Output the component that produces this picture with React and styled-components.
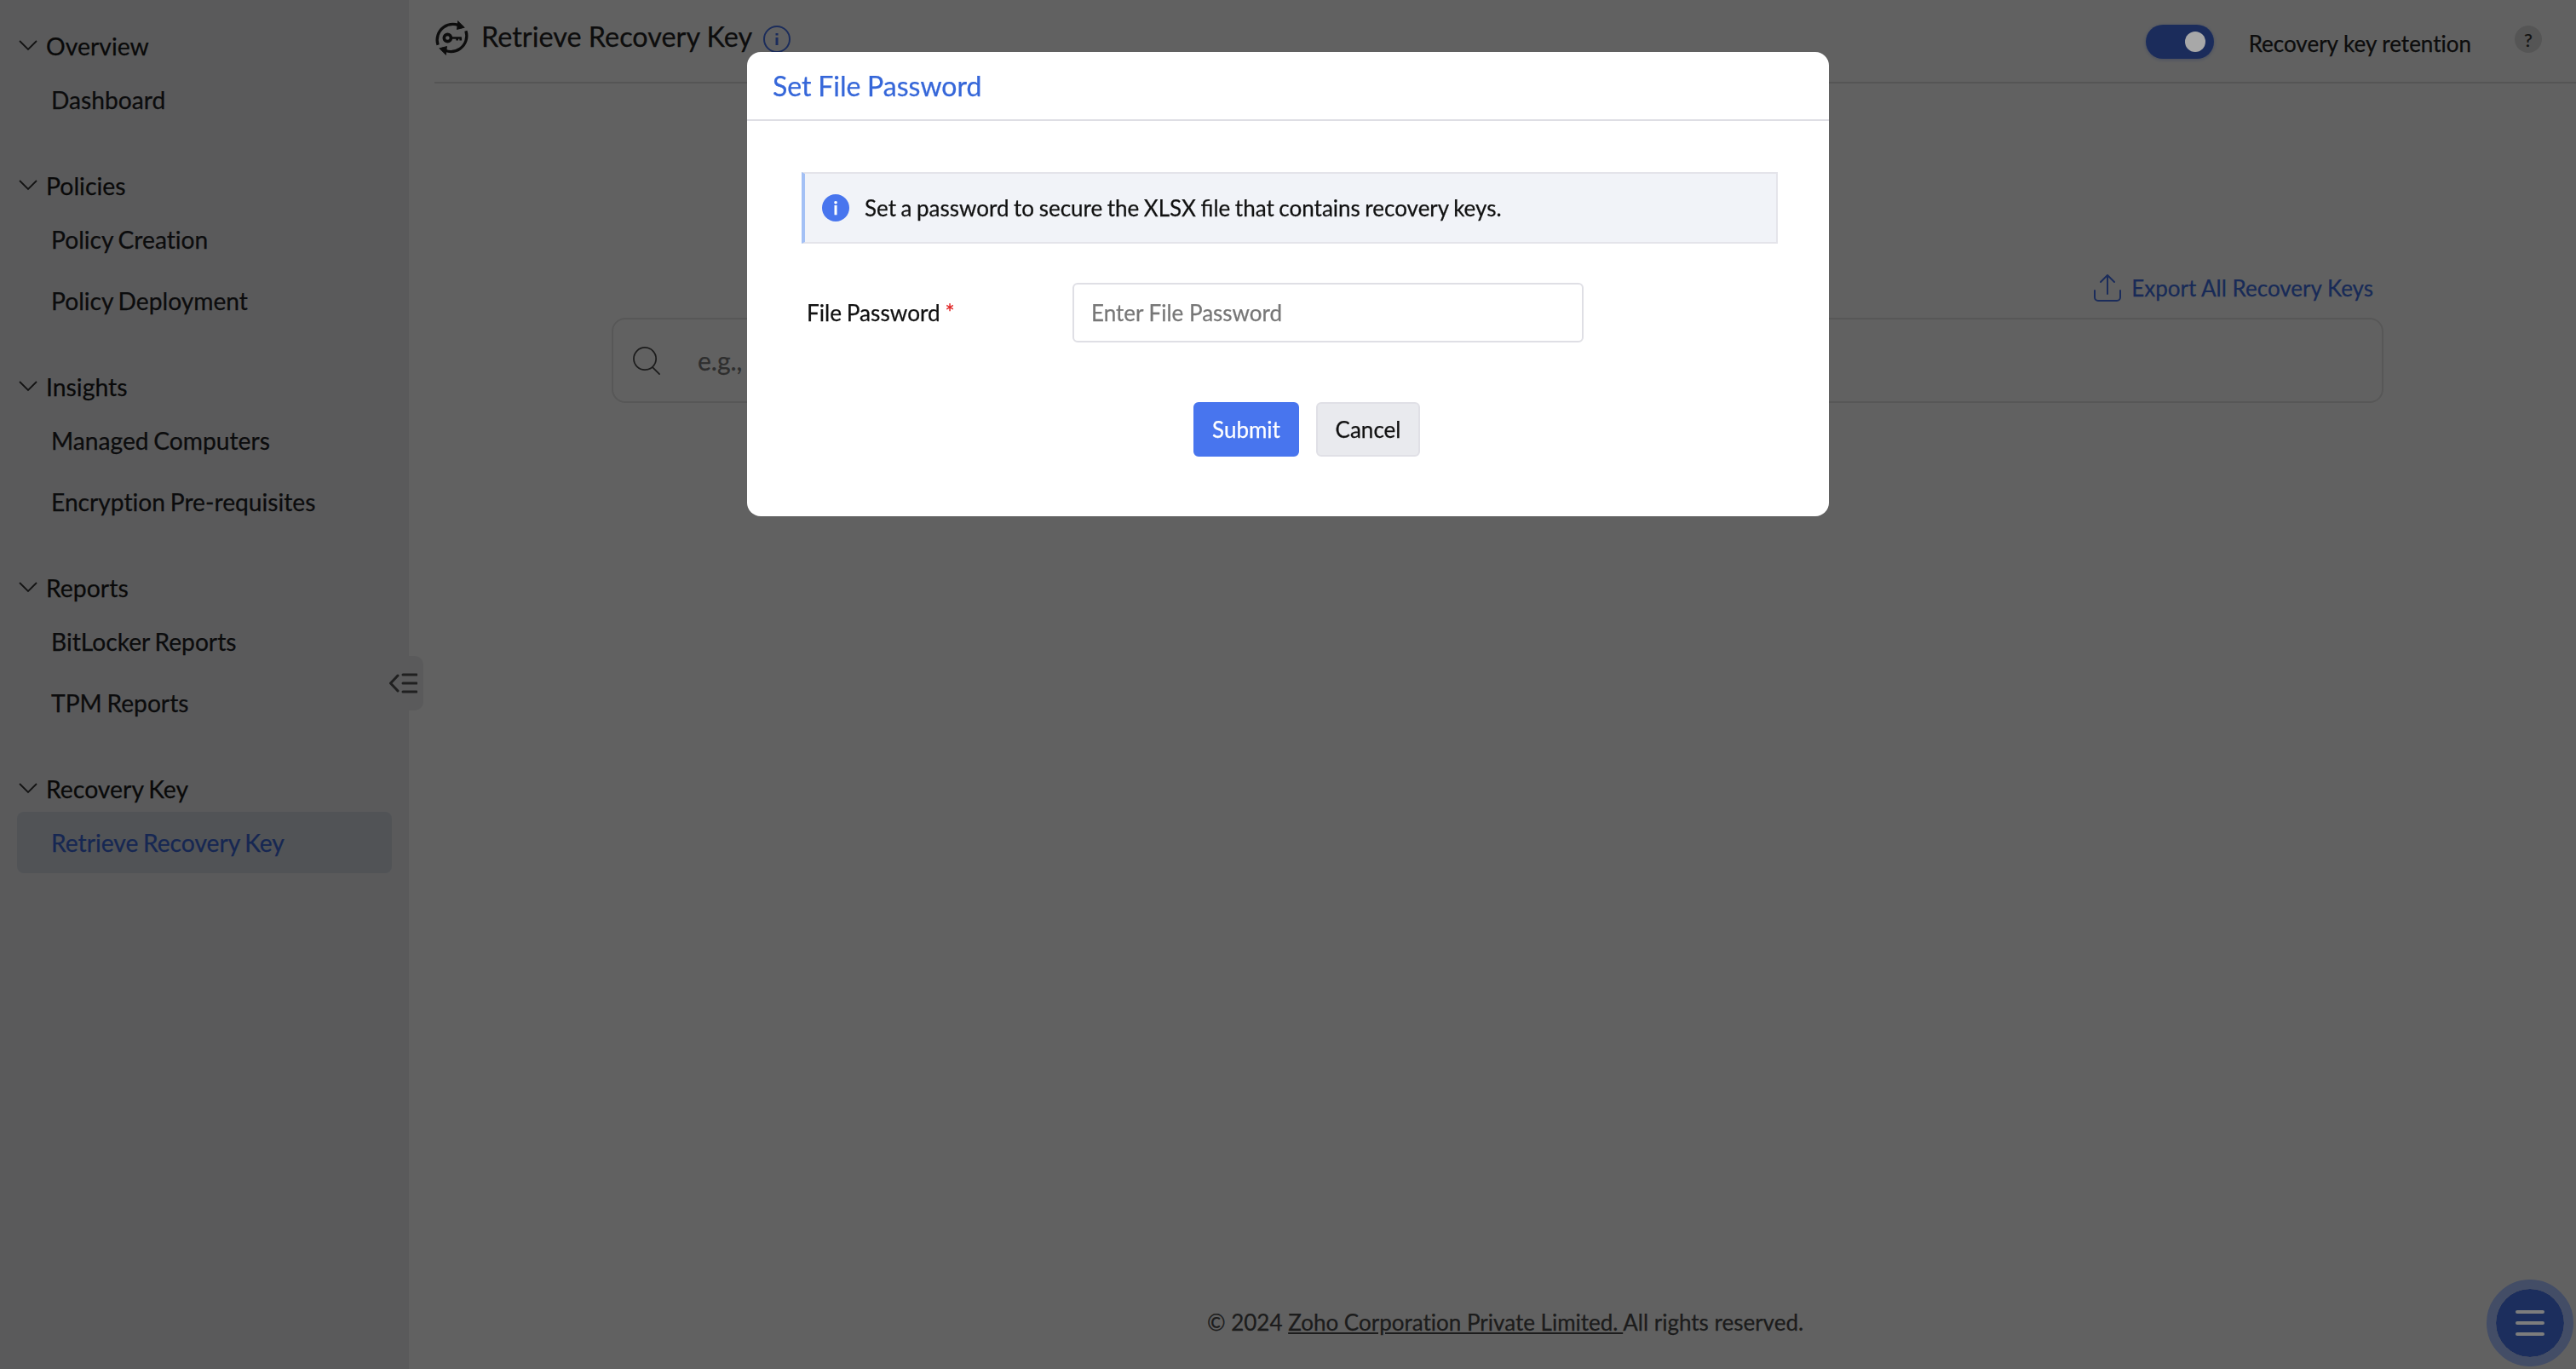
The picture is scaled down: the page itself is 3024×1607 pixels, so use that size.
import React from 'react';
import styled, {createGlobalStyle} from 'styled-components';

const GlobalStyle = createGlobalStyle`
	html, body {
		margin: 0;
		padding: 0;
		background: #fff;
		font-family: Lato, 'Open Sans', sans-serif;
		font-variant-ligatures: none;
		-webkit-text-stroke: 0.25px;
		color: #1f2124;
	}
	* {
		box-sizing: border-box;
	}
`;

const Page = styled.div`
	display: flex;
	width: 3024px;
	height: 1607px;
	overflow: hidden;
`;

const Sidebar = styled.aside`
	position: relative;
	flex: 0 0 480px;
	padding: 25px 20px 0;
	background: #ecedf0;
`;

const Group = styled.section`
	margin-bottom: 36px;
`;

const GroupHead = styled.div`
	display: flex;
	align-items: center;
	height: 56px;
	padding: 2px 0 0 2px;
	font-size: 28.4px;
	word-spacing: -1.5px;
	color: #1a1a1a;
`;

const Chevron = styled.svg`
	width: 22px;
	height: 14px;
	margin: -2px 10px 0 0;
	fill: none;
	stroke: #333;
	stroke-width: 1.8;
`;

const NavItem = styled.div`
	display: flex;
	align-items: center;
	height: 72px;
	padding-left: 40px;
	font-size: 28.2px;
	word-spacing: -1.5px;
	border-radius: 8px;
	color: ${props => (props.$active ? '#3a66d8' : '#1f2124')};
	background: ${props => (props.$active ? '#d4dae3' : 'transparent')};
`;

const CollapseTab = styled.div`
	position: absolute;
	top: 770px;
	right: -17px;
	display: flex;
	align-items: center;
	justify-content: flex-end;
	width: 40px;
	height: 64px;
	padding-right: 7px;
	background: #ecedf0;
	border-radius: 0 10px 10px 0;
	svg {
		flex: none;
		width: 33px;
		height: 24px;
		fill: none;
		stroke: #555;
		stroke-width: 3;
		stroke-linecap: round;
		stroke-linejoin: round;
	}
`;

const Main = styled.main`
	flex: 1;
	display: flex;
	flex-direction: column;
	padding-left: 30px;
`;

const Header = styled.header`
	display: flex;
	align-items: center;
	flex: 0 0 98px;
	padding: 0 40px 12px 0;
	border-bottom: 2px solid #dfdfdf;
`;

const KeyIcon = styled.svg`
	width: 41px;
	height: 41px;
	margin: 4px 14px 0 0;
	fill: none;
	stroke: #222;
`;

const Title = styled.h1`
	margin: 0;
	font-size: 32.4px;
	font-weight: 400;
	color: #222;
`;

const InfoIcon = styled.svg`
	width: 34px;
	height: 34px;
	margin: 8px 0 0 12px;
	fill: none;
	stroke: #4875ee;
	stroke-width: 2;
`;

const HeaderRight = styled.div`
	display: flex;
	align-items: center;
	margin: 14px 0 0 auto;
`;

const Toggle = styled.div`
	display: flex;
	align-items: center;
	justify-content: flex-end;
	width: 80px;
	height: 40px;
	padding-right: 10px;
	border-radius: 20px;
	background: #4875ee;
	box-shadow: 0 1px 4px rgba(72, 117, 238, 0.4);
`;

const Knob = styled.span`
	position: relative;
	z-index: 20;
	width: 24px;
	height: 24px;
	border-radius: 50%;
	background: #a8a8a8;
`;

const ToggleLabel = styled.span`
	margin: 4px 0 0 41px;
	font-size: 26px;
	color: #222;
`;

const HelpBadge = styled.span`
	display: flex;
	align-items: center;
	justify-content: center;
	width: 32px;
	height: 32px;
	margin: 0 0 6px 51px;
	border-radius: 50%;
	background: #e0e0e0;
	font-size: 22px;
	color: #333;
`;

const ExportRow = styled.div`
	display: flex;
	align-items: center;
	justify-content: flex-end;
	margin-top: 220px;
	padding-right: 238px;
	height: 40px;
	font-size: 26px;
	color: #4070e4;
`;

const ExportIcon = styled.svg`
	width: 34px;
	height: 34px;
	margin-right: 11px;
	fill: none;
	stroke: #4875ee;
	stroke-width: 2;
	stroke-linecap: round;
	stroke-linejoin: round;
`;

const SearchBox = styled.div`
	display: flex;
	align-items: center;
	height: 100px;
	margin: 15px 226px 0 208px;
	padding-left: 23px;
	border: 2px solid #e4e4e4;
	border-radius: 16px;
	font-size: 30px;
	color: #7a7a7a;
`;

const SearchIcon = styled.svg`
	width: 33px;
	height: 33px;
	margin-right: 43px;
	fill: none;
	stroke: #4a4a4a;
	stroke-width: 1.8;
	stroke-linecap: round;
`;

const Footer = styled.footer`
	margin-top: auto;
	padding-bottom: 39px;
	text-align: center;
	font-size: 26px;
	color: #4a4a4a;
	a {
		color: inherit;
		text-decoration: underline;
	}
`;

const Fab = styled.div`
	position: fixed;
	z-index: 20;
	left: 2919px;
	top: 1502px;
	display: flex;
	flex-direction: column;
	align-items: center;
	justify-content: center;
	gap: 9px;
	width: 102px;
	height: 102px;
	border-radius: 50%;
	background: #1c2e5d;
	border: 11px solid #434d66;
	background-clip: padding-box;
`;

const FabLine = styled.span`
	width: 34px;
	height: 4px;
	border-radius: 2px;
	background: #7d7d7d;
`;

const Overlay = styled.div`
	position: fixed;
	inset: 0;
	z-index: 10;
	display: flex;
	justify-content: center;
	align-items: flex-start;
	padding-top: 61px;
	background: rgba(0, 0, 0, 0.62);
`;

const Modal = styled.div`
	width: 1270px;
	height: 545px;
	background: #fff;
	border-radius: 16px;
	overflow: hidden;
`;

const ModalHead = styled.div`
	display: flex;
	align-items: center;
	height: 81px;
	padding-left: 30px;
	border-bottom: 2px solid #dedee4;
	font-size: 32px;
	word-spacing: -0.5px;
	color: #3667d9;
`;

const ModalBody = styled.div`
	padding: 60px 60px 0 64px;
`;

const Alert = styled.div`
	display: flex;
	align-items: center;
	height: 84px;
	padding-left: 20px;
	background: #f1f3f8;
	border: 2px solid #e4e4ea;
	border-left: 4px solid #a3c0f5;
	font-size: 26px;
	font-variant-ligatures: normal;
	word-spacing: -1.1px;
	color: #111;
`;

const AlertIcon = styled.span`
	display: flex;
	align-items: center;
	justify-content: center;
	width: 32px;
	height: 32px;
	margin-right: 18px;
	border-radius: 50%;
	background: #4875ee;
	color: #fff;
	font-size: 20px;
	font-weight: 700;
`;

const FormRow = styled.div`
	display: flex;
	align-items: center;
	margin-top: 46px;
`;

const FieldLabel = styled.label`
	flex: 0 0 318px;
	padding-left: 6px;
	font-size: 26.2px;
	word-spacing: -1px;
	color: #111;
	em {
		font-style: normal;
		color: #e02020;
	}
`;

const PasswordInput = styled.input`
	width: 600px;
	height: 70px;
	padding: 0 20px;
	border: 2px solid #dfdfe5;
	border-radius: 6px;
	font: 26px Lato, sans-serif;
	outline: none;
	&::placeholder {
		color: #777;
	}
`;

const Actions = styled.div`
	display: flex;
	justify-content: center;
	gap: 20px;
	margin: 70px 0 0 40px;
`;

const Button = styled.button`
	height: 64px;
	padding: 0;
	width: ${props => (props.$primary ? '124px' : '122px')};
	border-radius: 6px;
	border: 2px solid ${props => (props.$primary ? '#4875ee' : '#e0e0e6')};
	background: ${props => (props.$primary ? '#4875ee' : '#e9eaee')};
	color: ${props => (props.$primary ? '#fff' : '#111')};
	font: 26px Lato, sans-serif;
`;

const groups = [
	{title: 'Overview', items: ['Dashboard']},
	{title: 'Policies', items: ['Policy Creation', 'Policy Deployment']},
	{title: 'Insights', items: ['Managed Computers', 'Encryption Pre-requisites']},
	{title: 'Reports', items: ['BitLocker Reports', 'TPM Reports']},
	{title: 'Recovery Key', items: ['Retrieve Recovery Key']},
];

export default function App() {
	return (
		<>
			<GlobalStyle />
			<Page>
				<Sidebar>
					{groups.map(group => (
						<Group key={group.title}>
							<GroupHead>
								<Chevron viewBox="0 0 22 14">
									<path d="M1 2l10 10L21 2" />
								</Chevron>
								{group.title}
							</GroupHead>
							{group.items.map(item => (
								<NavItem key={item} $active={item === 'Retrieve Recovery Key'}>
									{item}
								</NavItem>
							))}
						</Group>
					))}
					<CollapseTab>
						<svg viewBox="0 0 33 24">
							<path d="M10 3L1.500 12l8.500 9" />
							<path d="M16 2h16M16 12h16M16 22h16" />
						</svg>
					</CollapseTab>
				</Sidebar>
				<Main>
					<Header>
						<KeyIcon viewBox="0 0 40 40">
							<path d="M32 8A18 18 0 0 0 4 28" strokeWidth="3.200" />
							<path d="M8 32A18 18 0 0 0 36 12" strokeWidth="3.200" />
							<path d="M27 1l7 7-8 2zM13 39l-7-7 8-2z" fill="#222" strokeWidth="1" />
							<circle cx="15" cy="20" r="4" strokeWidth="3.500" />
							<path d="M19 20h12M26 20v3M30 20v3" strokeWidth="2.600" />
						</KeyIcon>
						<Title>Retrieve Recovery Key</Title>
						<InfoIcon viewBox="0 0 34 34">
							<circle cx="17" cy="17" r="15" />
							<path d="M17 15v9M17 10v2.500" strokeWidth="3" />
						</InfoIcon>
						<HeaderRight>
							<Toggle>
								<Knob />
							</Toggle>
							<ToggleLabel>Recovery key retention</ToggleLabel>
							<HelpBadge>?</HelpBadge>
						</HeaderRight>
					</Header>
					<ExportRow>
						<ExportIcon viewBox="0 0 34 34">
							<path d="M2 20v8a4 4 0 0 0 4 4h22a4 4 0 0 0 4-4v-8" />
							<path d="M17 24V3M9 10l8-8 8 8" />
						</ExportIcon>
						Export All Recovery Keys
					</ExportRow>
					<SearchBox>
						<SearchIcon viewBox="0 0 34 34">
							<circle cx="14.500" cy="14.500" r="13.500" />
							<path d="M24 25l8 8" />
						</SearchIcon>
						e.g.,
					</SearchBox>
					<Footer>
						© 2024 <a href="#zoho">Zoho Corporation Private Limited. </a>All rights reserved.
					</Footer>
				</Main>
				<Fab>
					<FabLine />
					<FabLine />
					<FabLine />
				</Fab>
				<Overlay>
					<Modal>
						<ModalHead>Set File Password</ModalHead>
						<ModalBody>
							<Alert>
								<AlertIcon>i</AlertIcon>
								Set a password to secure the XLSX file that contains recovery keys.
							</Alert>
							<FormRow>
								<FieldLabel>
									File Password <em>*</em>
								</FieldLabel>
								<PasswordInput placeholder="Enter File Password" />
							</FormRow>
							<Actions>
								<Button $primary>Submit</Button>
								<Button>Cancel</Button>
							</Actions>
						</ModalBody>
					</Modal>
				</Overlay>
			</Page>
		</>
	);
}
